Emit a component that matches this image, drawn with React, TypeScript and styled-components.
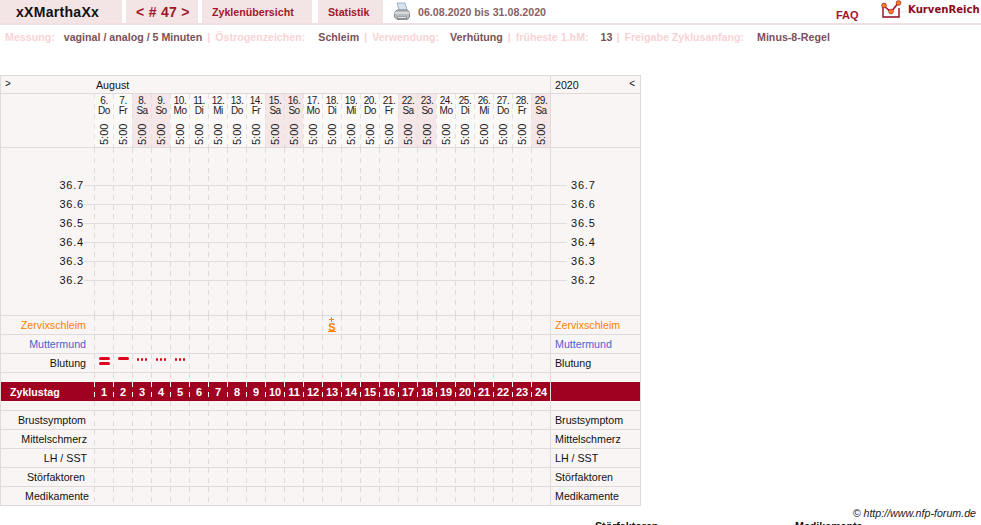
import React from "react";
import styled, { createGlobalStyle } from "styled-components";

const Global = createGlobalStyle`
  html, body { margin: 0; padding: 0; background: #fff; overflow: hidden; height: 525px; }
  body { font-family: "Liberation Sans", Arial, sans-serif; font-size: 11px; color: #111; }
`;

const Page = styled.div`width: 981px; height: 525px; overflow: hidden;`;

const Header = styled.header`
  display: flex; height: 25px; box-sizing: border-box;
  border-bottom: 2px solid #f3dfe1; align-items: stretch;
`;
const Tab = styled.div<{ $w: number; $gap: number; $size?: number; $dark?: boolean; $left: number; $track?: number }>`
  width: ${(p) => p.$w}px; margin-right: ${(p) => p.$gap}px;
  background: #f3e4e5; display: flex; align-items: center;
  padding-left: ${(p) => p.$left}px; box-sizing: border-box;
  font-weight: bold; font-size: ${(p) => p.$size ?? 10.67}px;
  letter-spacing: ${(p) => p.$track ?? 0}px;
  color: ${(p) => (p.$dark ? "#111" : "#a2162b")}; white-space: nowrap;
`;
const PrinterBox = styled.div`width: 35px; display: flex; justify-content: flex-end; align-items: center; padding-right: 7px; box-sizing: border-box;`;
const DateRange = styled.div`
  font-weight: bold; font-size: 10.67px; color: #8a5f65; display: flex; align-items: center; width: 418px; white-space: nowrap;
`;
const Faq = styled.div`
  font-weight: bold; font-size: 11px; color: #a2162b; width: 45px; padding-top: 9px; box-sizing: border-box;
`;
const LogoBox = styled.div`display: flex; align-items: flex-start; width: 100px;`;
const LogoText = styled.span`
  font-family: "DejaVu Sans", sans-serif; font-weight: bold; font-size: 10.1px; color: #8a0a1e;
  margin: 4px 0 0 0; white-space: nowrap;
`;

const InfoRow = styled.div`
  height: 23px; display: flex; align-items: center; padding-left: 5px; box-sizing: border-box;
  font-weight: bold; font-size: 10.67px; white-space: nowrap;
`;
const InfoLabel = styled.span`color: #f8d3d5;`;
const InfoValue = styled.span<{ $l: number; $r: number }>`
  color: #7c5158; margin-left: ${(p) => p.$l}px; margin-right: ${(p) => p.$r}px;
`;
const InfoSep = styled.span`color: #f8d3d5; margin-right: 5px;`;

const Table = styled.section`
  margin-top: 27px; width: 641px; box-sizing: border-box;
  border: 1px solid #e0dbdb; border-bottom: none; background: #f9f5f5;
`;
const Row = styled.div<{ $h: number; $noBorder?: boolean; $red?: boolean; $line?: boolean }>`
  position: relative; display: grid; grid-template-columns: 93px repeat(24, 19px) 90px;
  height: ${(p) => p.$h}px; box-sizing: border-box;
  border-bottom: ${(p) => (p.$noBorder ? "none" : "1px solid #e0dbdb")};
  background: ${(p) => (p.$red ? "#a00020" : "transparent")};
  color: ${(p) => (p.$red ? "#fff" : "inherit")};
  ${(p) => p.$line ? `&::after { content: ""; position: absolute; left: 83px; width: 483px; top: 9px; height: 1px; background: #e2dddd; }` : ""}
`;
const Chart = styled.div`border-bottom: 1px solid #e0dbdb;`;
const LeftCell = styled.div<{ $color?: string; $bold?: boolean; $start?: boolean; $pr?: number }>`
  display: flex; align-items: center; justify-content: ${(p) => (p.$start ? "flex-start" : "flex-end")};
  padding: 0 ${(p) => p.$pr ?? 8}px 0 ${(p) => (p.$start ? 9 : 0)}px;
  font-size: 10.67px; white-space: nowrap; min-width: 0; box-sizing: border-box;
  color: ${(p) => p.$color ?? "inherit"}; font-weight: ${(p) => (p.$bold ? "bold" : "normal")};
`;
const dashes = (c: string) =>
  `background-image: repeating-linear-gradient(to bottom, ${c} 0 5px, transparent 5px 10px); background-size: 1px 100%; background-repeat: no-repeat; background-position: left top;`;
const DayCell = styled.div<{ $red?: boolean }>`
  position: relative; display: flex; align-items: center; justify-content: center; box-sizing: border-box;
  padding-left: 1px;
  ${(p) => dashes(p.$red ? "#ffffff" : "#dedada")}
  font-weight: ${(p) => (p.$red ? "bold" : "normal")}; font-size: 11px;
`;
const EndCell = styled.div<{ $color?: string; $indent?: number; $between?: boolean }>`
  display: flex; align-items: center; justify-content: ${(p) => (p.$between ? "space-between" : "flex-start")};
  box-sizing: border-box; border-left: 1px solid #e0dbdb; font-size: 10.67px; white-space: nowrap;
  padding: 0 5px 0 ${(p) => p.$indent ?? 4}px; color: ${(p) => p.$color ?? "inherit"};
`;
const Month = styled.div`grid-column: 2 / span 24; display: flex; align-items: center; padding-left: 2px; font-size: 10.67px;`;
const Small = styled.span`font-size: 10px; align-self: flex-start; padding-top: 2px;`;
const Corner = styled.div`display: flex; padding-left: 4px;`;
const DayHead = styled.div<{ $weekend: boolean }>`
  box-sizing: border-box; display: flex; flex-direction: column; align-items: center;
  background-color: ${(p) => (p.$weekend ? "#f5e6e8" : "#fbf8f8")};
  ${dashes("#e4e0e0")}
  padding: 2px 0 0 1px;
  font-size: 10px; line-height: 10px; letter-spacing: -0.5px; color: #222;
`;
const DayTime = styled.span`
  writing-mode: vertical-rl; transform: rotate(180deg); font-size: 11px; line-height: 11px; letter-spacing: 0;
  margin-top: 7px; height: 22px;
`;
const Temp = styled.span`position: relative; z-index: 1; background: #f9f5f5; font-size: 11px; letter-spacing: 0.8px; line-height: 13px; margin-top: -1px;`;
const SpacerTop = styled.div`height: 28px; display: grid; grid-template-columns: 93px repeat(24, 19px) 90px;`;
const Mucus = styled.div`
  position: relative; display: flex; justify-content: center; align-self: flex-start; margin-top: 7px;
  color: #ff8000; font-weight: bold;
`;
const MucusPlus = styled.i`
  position: absolute; top: -4px; left: 50%; margin-left: -3.5px; width: 5px; height: 1px; background: #ff8000;
  &::after { content: ""; position: absolute; left: 2px; top: -2px; width: 1px; height: 5px; background: #ff8000; }
`;
const MucusS = styled.span`font-size: 11px; border-bottom: 1.5px solid #ff8000; line-height: 8px; height: 8px;`;
const Bleed = styled.div`display: flex; flex-direction: column; gap: 2px; align-self: flex-start; margin-top: 3px;`;
const Bar = styled.div`width: 11px; height: 3px; border-radius: 2px; background: #e0001c;`;
const Dots = styled.div`display: flex; gap: 1.5px; margin-top: 1px;`;
const Dot = styled.div`width: 2.5px; height: 2.5px; border-radius: 50%; background: #e0001c;`;

const Copyright = styled.div`
  margin-top: 1px; text-align: right; padding-right: 5px; font-size: 10.67px; font-style: italic; color: #222; line-height: 12px;
`;
const Legend = styled.div`
  display: flex; font-weight: bold; font-size: 10.67px; line-height: 12px; padding: 1px 0 0 595px; color: #111;
`;
const LegendItem = styled.span`flex: none; width: 200px;`;

const names = ["Do", "Fr", "Sa", "So", "Mo", "Di", "Mi"];
const days = Array.from({ length: 24 }, (_, i) => ({ n: i + 6, w: names[i % 7] }));
const temps = ["36.7", "36.6", "36.5", "36.4", "36.3", "36.2"];

const Cells: React.FC<{ fill?: Record<number, React.ReactNode> }> = ({ fill }) => (
  <>
    {days.map((_, i) => (
      <DayCell key={i}>{fill?.[i]}</DayCell>
    ))}
  </>
);

const Printer = () => (
  <svg width="18" height="19" viewBox="0 0 18 19">
    <path d="M4 1h8l2 7H6z" fill="#d6e4f2" stroke="#8aa0b8" strokeWidth="0.8" />
    <path d="M1.500 10.500 4 8h10.500l2 2.500v4.500l-2 2.500H4L1.500 15z" fill="#b9bcbf" stroke="#74787c" strokeWidth="0.8" />
    <path d="M1.500 11h15" stroke="#e6e8ea" strokeWidth="1.400" />
    <path d="M4 14.500h10v3H4z" fill="#8d9195" />
    <path d="M5 15.500h8" stroke="#f0f0f0" strokeWidth="0.8" />
  </svg>
);

const Logo = () => (
  <svg width="27" height="20" viewBox="0 0 27 20">
    <path d="M2 6v11h16V8" fill="none" stroke="#8a0a1e" strokeWidth="1.400" />
    <path d="M2 5l8 7 8-10" fill="none" stroke="#b01030" strokeWidth="1.600" />
    <circle cx="3" cy="5.500" r="2.400" fill="#f08020" stroke="#a01020" strokeWidth="0.6" />
    <circle cx="10" cy="11.500" r="2.400" fill="#f08020" stroke="#a01020" strokeWidth="0.6" />
    <circle cx="17.500" cy="3" r="2.400" fill="#f08020" stroke="#a01020" strokeWidth="0.6" />
    <path d="M26 12H19" stroke="#ddd" strokeWidth="0.8" />
  </svg>
);

const leftRows: [string, string?][] = [["Zervixschleim", "#ff8000"], ["Muttermund", "#4d62d0"], ["Blutung"]];
const bottomRows: [string, number][] = [
  ["Brustsymptom", 8],
  ["Mittelschmerz", 7],
  ["LH / SST", 7],
  ["Störfaktoren", 9],
  ["Medikamente", 5],
];

const threeDots = (
  <Bleed><Dots><Dot /><Dot /><Dot /></Dots></Bleed>
);
const bleeding: Record<number, React.ReactNode> = {
  0: <Bleed><Bar /><Bar /></Bleed>,
  1: <Bleed><Bar /></Bleed>,
  2: threeDots,
  3: threeDots,
  4: threeDots,
};
const mucus: Record<number, React.ReactNode> = {
  12: <Mucus><MucusPlus /><MucusS>S</MucusS></Mucus>,
};

export default function App() {
  return (
    <Page>
      <Global />
      <Header>
        <Tab $w={122} $gap={4} $size={14} $dark $left={16} $track={0.3}>xXMarthaXx</Tab>
        <Tab $w={72} $gap={4} $size={14} $left={10} $track={0.3}>&lt; # 47 &gt;</Tab>
        <Tab $w={110} $gap={6} $left={10}>Zyklenübersicht</Tab>
        <Tab $w={65} $gap={0} $left={10}>Statistik</Tab>
        <PrinterBox><Printer /></PrinterBox>
        <DateRange>06.08.2020 bis 31.08.2020</DateRange>
        <Faq>FAQ</Faq>
        <LogoBox><Logo /><LogoText>KurvenReich</LogoText></LogoBox>
      </Header>
      <InfoRow>
        <InfoLabel>Messung:</InfoLabel>
        <InfoValue $l={9} $r={5}>vaginal / analog / 5 Minuten</InfoValue>
        <InfoSep>|</InfoSep>
        <InfoLabel>Östrogenzeichen:</InfoLabel>
        <InfoValue $l={13} $r={5}>Schleim</InfoValue>
        <InfoSep>|</InfoSep>
        <InfoLabel>Verwendung:</InfoLabel>
        <InfoValue $l={11} $r={5}>Verhütung</InfoValue>
        <InfoSep>|</InfoSep>
        <InfoLabel>früheste 1.hM:</InfoLabel>
        <InfoValue $l={12} $r={4}>13</InfoValue>
        <InfoSep>|</InfoSep>
        <InfoLabel>Freigabe Zyklusanfang:</InfoLabel>
        <InfoValue $l={13} $r={0}>Minus-8-Regel</InfoValue>
      </InfoRow>
      <Table>
        <Row $h={18}>
          <Corner><Small>&gt;</Small></Corner>
          <Month>August</Month>
          <EndCell $between>2020<Small>&lt;</Small></EndCell>
        </Row>
        <Row $h={54}>
          <LeftCell />
          {days.map((d) => (
            <DayHead key={d.n} $weekend={d.w === "Sa" || d.w === "So"}>
              <span>{d.n}.</span>
              <span>{d.w}</span>
              <DayTime>5:00</DayTime>
            </DayHead>
          ))}
          <EndCell />
        </Row>
        <Chart>
          <SpacerTop>
            <LeftCell />
            <Cells />
            <EndCell />
          </SpacerTop>
          {temps.map((t) => (
            <Row key={t} $h={19} $noBorder $line>
              <LeftCell $pr={10}><Temp>{t}</Temp></LeftCell>
              <Cells />
              <EndCell $indent={20}><Temp>{t}</Temp></EndCell>
            </Row>
          ))}
          <Row $h={25} $noBorder>
            <LeftCell />
            <Cells />
            <EndCell />
          </Row>
        </Chart>
        {leftRows.map(([label, color], i) => (
          <Row key={label} $h={19}>
            <LeftCell $color={color}>{label}</LeftCell>
            <Cells fill={i === 0 ? mucus : i === 2 ? bleeding : undefined} />
            <EndCell $color={color}>{label}</EndCell>
          </Row>
        ))}
        <Row $h={9} $noBorder>
          <LeftCell />
          <Cells />
          <EndCell />
        </Row>
        <Row $h={19} $noBorder $red>
          <LeftCell $bold $start>Zyklustag</LeftCell>
          {days.map((_, i) => (
            <DayCell key={i} $red>{i + 1}</DayCell>
          ))}
          <EndCell />
        </Row>
        <Row $h={10}>
          <LeftCell />
          <Cells />
          <EndCell />
        </Row>
        {bottomRows.map(([label, pr]) => (
          <Row key={label} $h={19}>
            <LeftCell $pr={pr}>{label}</LeftCell>
            <Cells />
            <EndCell>{label}</EndCell>
          </Row>
        ))}
      </Table>
      <Copyright>© http://www.nfp-forum.de</Copyright>
      <Legend>
        <LegendItem>Störfaktoren</LegendItem>
        <LegendItem>Medikamente</LegendItem>
      </Legend>
    </Page>
  );
}
